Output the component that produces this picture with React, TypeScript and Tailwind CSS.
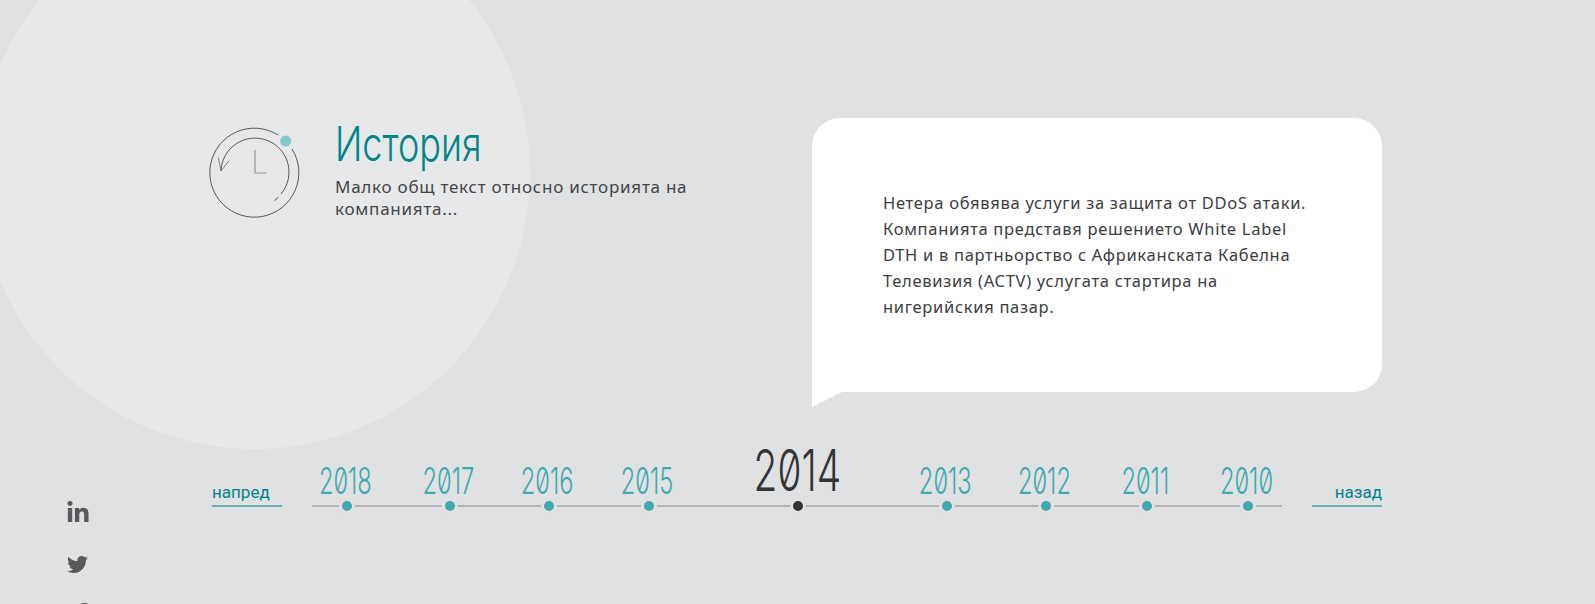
import React from 'react';
import { FaLinkedinIn, FaTwitter, FaFacebookF } from 'react-icons/fa';

const bodyFont = "font-['Noto_Sans',sans-serif]";

const ClockIcon = () => (
  <svg viewBox="0 0 96 96" className="w-[96px] h-[96px] shrink-0" fill="none">
    <path d="M84 25A44.5 44.5 0 1 1 70 11" stroke="#47484a" strokeWidth="0.9" />
    <path d="M13 47A34 34 0 1 1 73 70" stroke="#47484a" strokeWidth="0.9" />
    <path d="M70.3 73.3L66.3 76.7" stroke="#47484a" strokeWidth="0.9" />
    <path d="M10.3 33.7L13 47L21 36.7" stroke="#737476" strokeWidth="0.9" />
    <path d="M47 26V49H58.7" stroke="#949597" strokeWidth="1.2" />
    <circle cx="77.7" cy="17" r="5.5" fill="#7fcccc" />
  </svg>
);

const years = [
  { year: '2018', className: 'ml-0' },
  { year: '2017', className: 'ml-[43px]' },
  { year: '2016', className: 'ml-[39px]' },
  { year: '2015', className: 'ml-[40px]' },
  { year: '2014', className: 'ml-[69px]', active: true },
  { year: '2013', className: 'ml-[69px]' },
  { year: '2012', className: 'ml-[39px]' },
  { year: '2011', className: 'ml-[41px]' },
  { year: '2010', className: 'ml-[41px]' },
];

const Year = ({ year, active, className }: { year: string; active?: boolean; className: string }) => (
  <div className={`flex flex-col items-center ${active ? 'w-[100px]' : 'w-[60px]'} ${className}`}>
    <span
      className={
        active
          ? "font-['Inter'] font-light [font-feature-settings:'zero'] text-[58px] leading-[58px] text-[#333436] scale-x-[0.67] -translate-x-[1px] -mb-[1px]"
          : "font-['Inter'] font-light [font-feature-settings:'zero'] text-[37px] leading-[37px] text-[#3fa9ae] scale-x-[0.64] -translate-x-[2px] -mb-[1px]"
      }
    >
      {year}
    </span>
    <span
      className={`w-[16px] h-[16px] -mb-[9px] rounded-full border-[3px] border-[#e0e1e3] ${
        active ? 'bg-[#333436]' : 'bg-[#3fa9ae]'
      }`}
    />
  </div>
);

export default function App() {
  return (
    <div className="relative h-[604px] overflow-hidden bg-[#e0e1e3] flex">
      <div className="absolute left-[-22px] top-[-103px] w-[552px] h-[552px] rounded-full bg-[#e7e8ea]" />

      <aside className="relative w-[212px] shrink-0 pl-[66px] pt-[501px] flex flex-col gap-[29px] text-[#58595b]">
        <FaLinkedinIn className="w-[24px] h-[24px] shrink-0" />
        <FaTwitter className="w-[21px] h-[21px] shrink-0 ml-[1px]" />
        <FaFacebookF className="w-[24px] h-[24px] shrink-0 ml-[3px] -mt-[1px]" />
      </aside>

      <main className="relative w-[1170px] flex flex-col">
        <div className="flex justify-between pt-[118px]">
          <div className="flex gap-[31px] -ml-[4px] pt-[6px]">
            <ClockIcon />
            <div className="w-[370px]">
              <h1 className="font-['Inter'] font-light text-[48px] leading-[48px] text-[#00858a] origin-left scale-x-[0.75] whitespace-nowrap -mt-[4px]">
                История
              </h1>
              <p className={`${bodyFont} text-[17px] leading-[22px] tracking-[0.75px] text-[#444547] mt-[8px]`}>
                Малко общ текст относно историята на компанията...
              </p>
            </div>
          </div>

          <div className="w-[570px]">
            <div className="h-[274px] bg-white rounded-[28px] rounded-bl-none pl-[71px] pr-[70px] pt-[72px]">
              <p className={`${bodyFont} text-[16.5px] leading-[26px] tracking-[0.7px] text-[#3c3d3f]`}>
                Нетера обявява услуги за защита от DDoS атаки.
                <br />
                Компанията представя решението White Label
                <br />
                DTH и в партньорство с Африканската Кабелна
                <br />
                Телевизия (ACTV) услугата стартира на
                <br />
                нигерийския пазар.
              </p>
            </div>
            <svg viewBox="0 0 30 15" className="block w-[30px] h-[15px]">
              <path d="M0 0H30L0 15Z" fill="#ffffff" />
            </svg>
          </div>
        </div>

        <div className="flex items-end justify-between mt-[34px]">
          <a className="font-['Roboto'] w-[70px] h-[24px] border-b-2 border-[#66b2b2] text-[17px] leading-[18px] text-[#00858a]">
            напред
          </a>
          <div className="flex items-end w-[970px] pl-[5px] border-b-2 border-[#b3b4b6]">
            {years.map((y) => (
              <Year key={y.year} {...y} />
            ))}
          </div>
          <a className="font-['Roboto'] w-[70px] h-[24px] border-b-2 border-[#66b2b2] text-[17px] leading-[18px] text-right text-[#00858a]">
            назад
          </a>
        </div>
      </main>
    </div>
  );
}
